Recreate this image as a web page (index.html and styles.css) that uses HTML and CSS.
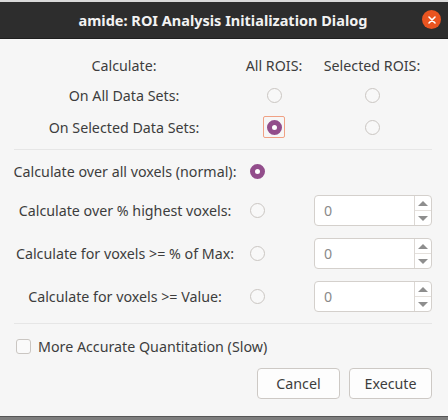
FILE: index.html
```html
<!DOCTYPE html>
<html>
<head>
<meta charset="utf-8">
<link rel="stylesheet" href="styles.css">
</head>
<body>
<div class="behind"></div>
<div class="window">
  <header class="titlebar">
    <span class="title">amide: ROI Analysis Initialization Dialog</span>
    <span class="close"><svg width="8" height="8" viewBox="0 0 8 8"><path d="M1 1L7 7M7 1L1 7" stroke="#fff" stroke-width="1.6" stroke-linecap="round"/></svg></span>
  </header>
  <main class="content">
    <section class="topgrid">
      <div class="lbl">Calculate:</div>
      <div class="lbl">All ROIS:</div>
      <div class="lbl">Selected ROIS:</div>

      <div class="lbl">On All Data Sets:</div>
      <div class="cell"><span class="radio"></span></div>
      <div class="cell"><span class="radio"></span></div>

      <div class="lbl">On Selected Data Sets:</div>
      <div class="cell"><span class="focus"><span class="radio on"></span></span></div>
      <div class="cell"><span class="radio"></span></div>
    </section>
    <div class="sep"></div>
    <section class="midgrid">
      <div class="lbl">Calculate over all voxels (normal):</div>
      <div class="cell"><span class="radio on"></span></div>
      <div></div>

      <div class="lbl">Calculate over % highest voxels:</div>
      <div class="cell"><span class="radio"></span></div>
      <div class="spin"><span class="val">0</span><span class="arrows"><span class="up"></span><span class="down"></span></span></div>

      <div class="lbl">Calculate for voxels &gt;= % of Max:</div>
      <div class="cell"><span class="radio"></span></div>
      <div class="spin"><span class="val">0</span><span class="arrows"><span class="up"></span><span class="down"></span></span></div>

      <div class="lbl">Calculate for voxels &gt;= Value:</div>
      <div class="cell"><span class="radio"></span></div>
      <div class="spin"><span class="val">0</span><span class="arrows"><span class="up"></span><span class="down"></span></span></div>
    </section>
    <div class="sep sep2"></div>
    <label class="check"><span class="box"></span><span>More Accurate Quantitation (Slow)</span></label>
    <div class="actions">
      <button class="btn">Cancel</button>
      <button class="btn">Execute</button>
    </div>
  </main>
</div>
<div class="under"></div>
</body>
</html>
```

FILE: styles.css
```css
* { box-sizing: border-box; }
html, body { margin: 0; padding: 0; }
body {
  width: 448px;
  height: 420px;
  overflow: hidden;
  background: #f6f6f6;
  font-family: "Noto Sans", "DejaVu Sans", sans-serif;
  font-size: 14.25px;
  color: #3d3d3d;
}
.behind {
  height: 3px;
  background: #d9d9d9;
  border-bottom: 1px solid #b8b8b8;
}
.window {
  height: 413px;
  display: flex;
  flex-direction: column;
}
.titlebar {
  height: 37px;
  margin-top: -1px;
  background: #2d2d2d;
  border-bottom: 1px solid #1e1e1e;
  display: flex;
  align-items: center;
  justify-content: center;
  position: relative;
}
.title {
  color: #f2f2f2;
  font-weight: bold;
  font-size: 14.5px;
  margin-left: -2px;
}
.close {
  position: absolute;
  right: 7px;
  top: 8px;
  width: 19px;
  height: 19px;
  border-radius: 50%;
  background: #e95420;
  display: flex;
  align-items: center;
  justify-content: center;
}
.content {
  flex: 1;
  padding: 11px 16px 0 14px;
  display: flex;
  flex-direction: column;
}
.topgrid {
  display: grid;
  grid-template-columns: 220px 80px 116px;
  grid-template-rows: 30px 30px 34px;
}
.lbl {
  display: flex;
  align-items: center;
  justify-content: center;
  white-space: nowrap;
}
.cell {
  display: flex;
  align-items: center;
  justify-content: center;
}
.radio {
  width: 15px;
  height: 15px;
  border-radius: 50%;
  border: 1px solid #cac6c2;
  background: #f8f8f8;
  display: inline-block;
}
.radio.on {
  border: 5px solid #924d8b;
  background: #ffffff;
}
.focus {
  width: 22px;
  height: 22px;
  border: 1px solid #f0a184;
  border-radius: 2px;
  display: flex;
  align-items: center;
  justify-content: center;
}
.sep {
  height: 1px;
  background: #e6e6e6;
  margin-top: 5px;
}
.midgrid {
  display: grid;
  grid-template-columns: 222px 42px 1fr;
  grid-template-rows: 23px 31px 31px 31px;
  row-gap: 12px;
  margin-top: 10px;
}
.spin {
  justify-self: end;
  width: 118px;
  height: 31px;
  background: #ffffff;
  border: 1px solid #d4d0cc;
  border-radius: 4px;
  display: flex;
}
.val {
  flex: 1;
  display: flex;
  align-items: center;
  padding-left: 9px;
  color: #8a8a8a;
}
.arrows {
  width: 17px;
  border-left: 1px solid #dcd8d4;
  display: flex;
  flex-direction: column;
}
.arrows span {
  flex: 1;
  display: flex;
  align-items: center;
  justify-content: center;
}
.arrows .up { border-bottom: 1px solid #e4e0dc; }
.arrows .up::before {
  content: "";
  border-left: 5px solid transparent;
  border-right: 5px solid transparent;
  border-bottom: 5px solid #8e8e8e;
}
.arrows .down::before {
  content: "";
  border-left: 5px solid transparent;
  border-right: 5px solid transparent;
  border-top: 5px solid #8e8e8e;
}
.sep2 { margin-top: 11px; }
.check {
  display: flex;
  align-items: center;
  height: 24px;
  margin-top: 10px;
  gap: 7px;
}
.box {
  width: 15px;
  height: 15px;
  margin-left: 2px;
  border: 1px solid #cac6c2;
  border-radius: 3px;
  background: #fafafa;
}
.actions {
  display: flex;
  justify-content: flex-end;
  gap: 9px;
  margin-top: 10px;
}
.btn {
  width: 83px;
  height: 31px;
  font-family: inherit;
  font-size: 14.25px;
  color: #3d3d3d;
  background: #fdfdfd;
  border: 1px solid #cdc9c5;
  border-radius: 4px;
  padding: 0;
}
.under {
  height: 4px;
  background: #7d7d7d;
  border-top: 1px solid #555;
}
```
